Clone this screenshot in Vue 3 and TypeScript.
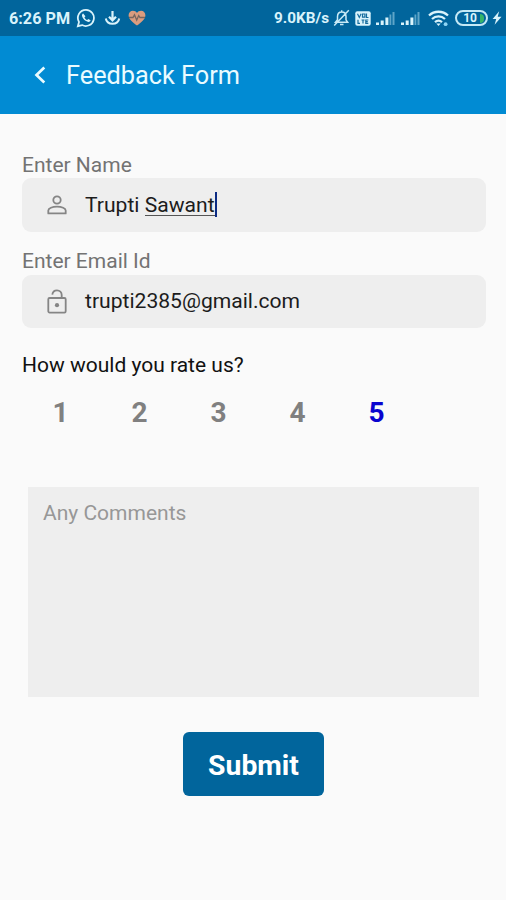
<script setup lang="ts">
import { ref } from 'vue'

const ratings: number[] = [1, 2, 3, 4, 5]
const selected = ref<number>(5)
const firstName = 'Trupti'
const lastName = 'Sawant'
const email = 'trupti2385@gmail.com'
</script>

<template>
  <div class="screen">
    <div class="status">
      <span class="clock">6:26 PM</span>
      <svg class="i-whatsapp" width="20" height="20" viewBox="0 0 24 24">
        <path d="M12 2.2a9.7 9.7 0 0 0-8.4 14.6L2.2 21.8l5.1-1.3A9.7 9.7 0 1 0 12 2.2z" fill="none" stroke="#d9f3fb" stroke-width="2.1" />
        <path d="M8.6 6.6c-.9.4-1.6 1.5-1.4 2.8.5 3.3 4 6.7 7.5 7.3 1.3.2 2.5-.7 2.8-1.9l-2.7-1.6-1.4 1.3c-1.5-.6-2.6-1.7-3.3-3.2l1.2-1.4z" fill="#d9f3fb" />
      </svg>
      <svg class="i-download" width="17" height="16" viewBox="0 0 17 16">
        <path d="M8.5 1v9M5 6.7l3.5 3.6L12 6.7" fill="none" stroke="#d9f3fb" stroke-width="2.2" />
        <path d="M1.8 8.5c.6 3.4 3.2 5.3 6.7 5.3s6.1-1.9 6.7-5.3" fill="none" stroke="#d9f3fb" stroke-width="2" />
      </svg>
      <svg class="i-heart" width="18" height="16" viewBox="0 0 18 16">
        <path d="M9 15.5C5 12.5.6 9.3.6 5.2.6 2.5 2.6.7 4.9.7 6.7.7 8.2 1.6 9 3 9.8 1.6 11.3.7 13.1.7c2.3 0 4.3 1.8 4.3 4.5 0 4.1-4.4 7.3-8.4 10.3z" fill="#d99c7f" />
        <path d="M1 7.5h4l1.5-2.7 2.2 5.4 2-4.6 1.3 1.9h5" fill="none" stroke="#75665f" stroke-width="1.3" />
      </svg>

      <span class="speed">9.0KB/s</span>
      <svg class="i-bell" width="17" height="18" viewBox="0 0 17 18">
        <path d="M2.5 13.3h12.2l-1.7-2.5V7.6c0-2.8-1.6-4.6-4.2-4.6S4.5 4.8 4.5 7.6v3.2zM7 15.6h3.5M8.7 3V1.3M15.8 1.3L1.2 16.5" fill="none" stroke="#c9eaf6" stroke-width="1.5" />
      </svg>
      <svg class="i-volte" width="16" height="15" viewBox="0 0 16 15">
        <rect x=".3" y=".3" width="15.4" height="14.4" rx="2" fill="#d9f3fb" />
        <path d="M2.5 2.8l1.8 3.7 1.8-3.7M7.5 3h2.4v3.2H7.5zM11.5 2.5v4h2M3 8.7v3.6h2M6.5 9h3M8 9v3.5M13.3 9h-2.5v3.3h2.5M10.8 10.6h2" fill="none" stroke="#146c9e" stroke-width="1.2" />
      </svg>
      <svg class="i-signal" width="19" height="15" viewBox="0 0 19 15">
        <path d="M0 11.5h3V14H0zM4.7 9.5h3V14h-3zM9.4 6.5h3V14h-3z" fill="#d9f3fb" />
        <path d="M13.5 3.5h1.8V14h-1.8zM16.5 1h2v13h-2z" fill="#5fa5c8" />
      </svg>
      <svg class="i-signal second" width="19" height="15" viewBox="0 0 19 15">
        <path d="M0 11.5h3V14H0zM4.7 9.5h3V14h-3zM9.4 6.5h3V14h-3z" fill="#d9f3fb" />
        <path d="M13.5 3.5h1.8V14h-1.8zM16.5 1h2v13h-2z" fill="#5fa5c8" />
      </svg>
      <svg class="i-wifi" width="21" height="17" viewBox="0 0 21 17">
        <path d="M1 5.5c5.3-5 13.7-5 19 0M4 9c3.7-3.4 9.3-3.4 13 0M7 12.2c2.1-1.9 4.9-1.9 7 0" fill="none" stroke="#d9f3fb" stroke-width="2.3" />
        <path d="M8.3 13.5h4.4l-2.2 2.5z" fill="#d9f3fb" />
        <circle cx="17.6" cy="14.2" r="1.9" fill="#8fd6f5" />
      </svg>
      <div class="battery"><span>10</span><i></i></div>
      <svg class="i-bolt" width="10" height="14" viewBox="0 0 10 14">
        <path d="M7.2.3L.6 8h3.6L2.6 13.7 9.5 5.7H5.7z" fill="#d9f3fb" />
      </svg>
    </div>

    <header class="bar">
      <svg class="back" width="12" height="18" viewBox="0 0 12 18">
        <path d="M10.3 1.5L2.5 9l7.8 7.5" fill="none" stroke="#e9fbff" stroke-width="2.7" />
      </svg>
      <h1>Feedback Form</h1>
    </header>

    <main class="form">
      <div class="label name-label">Enter Name</div>
      <div class="field">
        <svg width="20" height="20" viewBox="0 0 20 20" fill="none" stroke="#858585" stroke-width="1.8">
          <circle cx="10" cy="5" r="3.7" />
          <path d="M1.3 18.4v-2.8c0-2.3 4-4 8.7-4s8.7 1.7 8.7 4v2.8z" stroke-linejoin="round" />
        </svg>
        <div class="value name-value">{{ firstName }} <span class="composing">{{ lastName }}</span><i class="caret"></i></div>
      </div>

      <div class="label email-label">Enter Email Id</div>
      <div class="field email">
        <svg class="lock" width="20" height="25" viewBox="0 0 20 25" fill="none" stroke="#858585" stroke-width="1.8">
          <rect x="1.3" y="9" width="17.4" height="14.6" rx="1.3" />
          <path d="M5.3 5.7C5.6 3 7.5 1.3 10 1.3c2.7 0 4.7 2 4.7 4.700V9" />
          <circle cx="10" cy="16.2" r="2.1" fill="#858585" stroke="none" />
        </svg>
        <div class="value email-value">{{ email }}</div>
      </div>

      <div class="question">How would you rate us?</div>
      <div class="ratings">
        <button
          v-for="n in ratings"
          :key="n"
          type="button"
          :class="{ active: n === selected }"
          @click="selected = n"
        >{{ n }}</button>
      </div>

      <textarea class="comments" placeholder="Any Comments"></textarea>
      <button class="submit" type="button">Submit</button>
    </main>
  </div>
</template>

<style>
body {
  margin: 0;
  background: #fafafa;
}
</style>

<style scoped>
.screen {
  width: 506px;
  height: 900px;
  overflow: hidden;
  background: #fafafa;
  font-family: Roboto, sans-serif;
}
svg {
  display: block;
  flex: none;
}
.status {
  display: flex;
  align-items: center;
  box-sizing: border-box;
  height: 36px;
  padding-left: 9px;
  background: #01659c;
  color: #d9f3fb;
  font-size: 16.2px;
  font-weight: 700;
  white-space: nowrap;
}
.clock {
  width: 61px;
}
.i-whatsapp {
  margin-left: 6px;
}
.i-download {
  margin-left: 8px;
}
.i-heart {
  margin-left: 7px;
}
.speed {
  width: 56px;
  margin-left: 128px;
  font-size: 15.3px;
}
.i-bell {
  margin-left: 3px;
}
.i-volte {
  margin-left: 5px;
}
.i-signal {
  margin-left: 5px;
}
.i-signal.second {
  margin-left: 6px;
}
.i-wifi {
  margin-left: 8px;
}
.battery {
  display: flex;
  align-items: center;
  justify-content: flex-end;
  box-sizing: border-box;
  width: 33px;
  height: 16px;
  margin-left: 6px;
  padding-right: 2px;
  border: 2px solid #c4e9f6;
  border-radius: 8px;
  font-size: 12px;
  line-height: 12px;
}
.battery i {
  width: 4px;
  height: 9px;
  margin-left: 3px;
  border-radius: 0 4px 4px 0;
  background: #35b56a;
}
.i-bolt {
  margin-left: 4px;
}
.bar {
  display: flex;
  align-items: center;
  height: 78px;
  padding-left: 34px;
  background: #018bd3;
}
.bar h1 {
  margin: 2px 0 0 20px;
  color: #e9fbff;
  font-size: 25.3px;
  font-weight: 400;
  line-height: 32px;
}
.form {
  display: flex;
  flex-direction: column;
  padding: 38px 20px 0 22px;
}
.label {
  height: 26px;
  color: #737373;
  font-size: 21px;
  line-height: 26px;
}
.email-label {
  height: 27px;
  margin-top: 16px;
}
.field {
  display: flex;
  align-items: center;
  box-sizing: border-box;
  height: 54px;
  padding-left: 25px;
  border-radius: 9px;
  background: #eeeeee;
}
.field.email {
  height: 53px;
}
.lock {
  margin-bottom: 1px;
}
.value {
  display: flex;
  margin-left: 18px;
  color: #1c1c1c;
  font-size: 21.1px;
  line-height: 26px;
  white-space: pre;
}
.name-value {
  margin-bottom: 1px;
}
.email-value {
  margin-bottom: 1px;
}
.composing {
  height: 23px;
  border-bottom: 1px solid #555;
}
.caret {
  width: 2px;
  height: 25px;
  background: #0d2c84;
}
.question {
  margin-top: 24px;
  color: #111;
  font-size: 21px;
  line-height: 26px;
}
.ratings {
  display: flex;
  margin: 18px 0 0 -1px;
}
.ratings button {
  width: 79px;
  padding: 0;
  border: 0;
  background: none;
  color: #808080;
  font: 700 28px/34px Roboto, sans-serif;
}
.ratings button.active {
  color: #0a04cf;
}
.comments {
  display: block;
  box-sizing: border-box;
  width: 451px;
  height: 210px;
  margin: 57px 0 0 6px;
  padding: 13px 15px;
  border: 0;
  outline: 0;
  resize: none;
  background: #eeeeee;
  font: 400 21px/26px Roboto, sans-serif;
}
.comments::placeholder {
  color: #979797;
  opacity: 1;
}
.submit {
  width: 141px;
  height: 64px;
  margin: 35px 0 0 161px;
  padding: 4px 0 0;
  border: 0;
  border-radius: 6px;
  background: #01659c;
  color: #fff;
  font: 700 28.3px/34px Roboto, sans-serif;
}
</style>
